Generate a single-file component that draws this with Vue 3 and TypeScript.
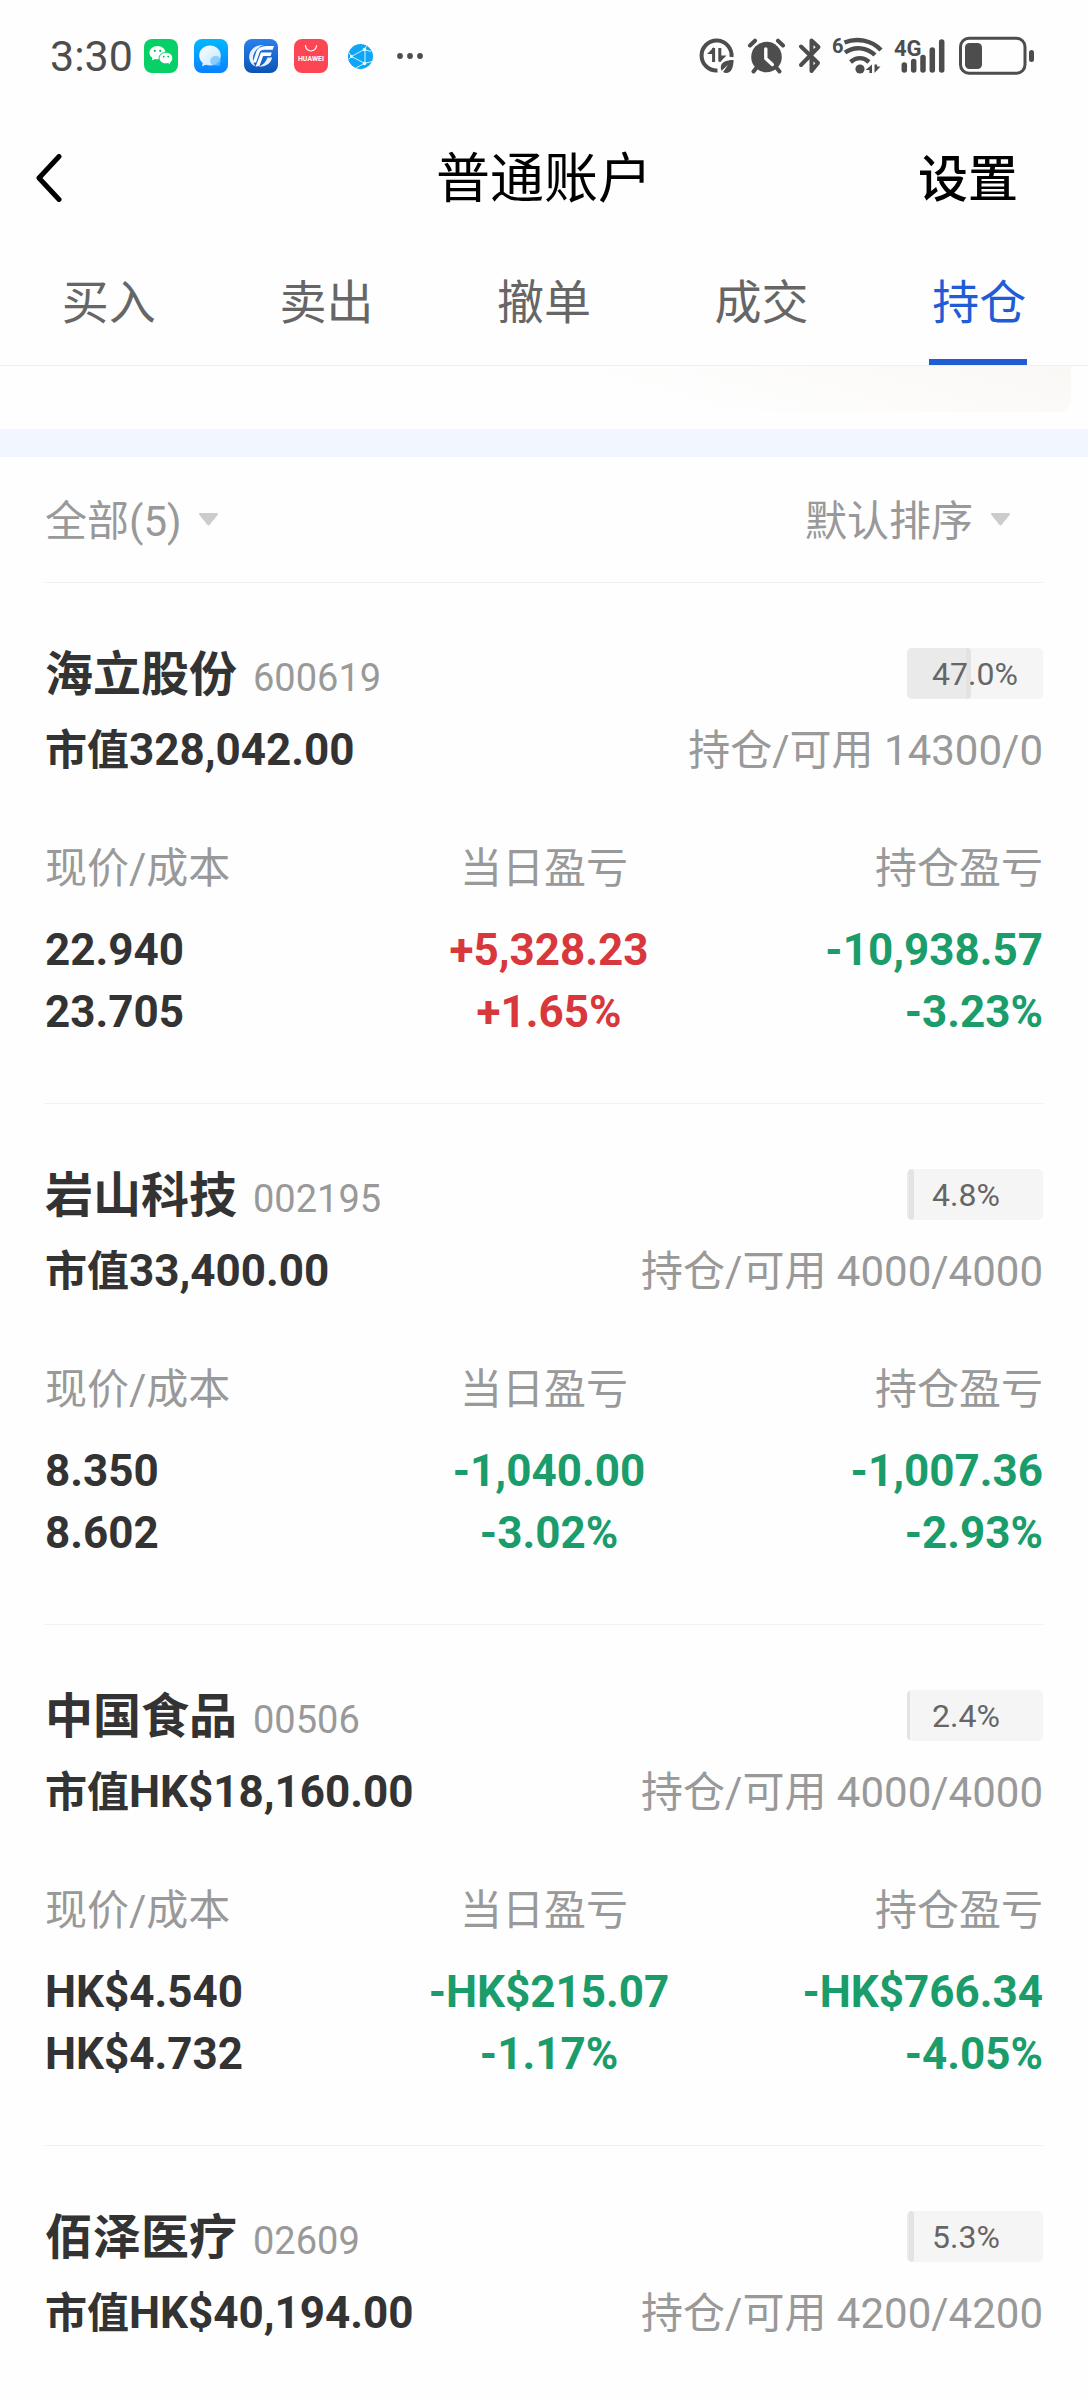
<script setup lang="ts">
import { ref } from 'vue'

type Tone = 'up' | 'down'

interface Profit {
  amount: string
  rate: string
  tone: Tone
}

interface Holding {
  name: string
  code: string
  share: number
  marketValue: string
  quantity: string
  price?: string
  cost?: string
  today?: Profit
  total?: Profit
}

const tabs = ['买入', '卖出', '撤单', '成交', '持仓']
const activeTab = ref('持仓')
const scope = ref('all')
const order = ref('default')

const holdings: Holding[] = [
  {
    name: '海立股份',
    code: '600619',
    share: 47.0,
    marketValue: '328,042.00',
    quantity: '14300/0',
    price: '22.940',
    cost: '23.705',
    today: { amount: '+5,328.23', rate: '+1.65%', tone: 'up' },
    total: { amount: '-10,938.57', rate: '-3.23%', tone: 'down' },
  },
  {
    name: '岩山科技',
    code: '002195',
    share: 4.8,
    marketValue: '33,400.00',
    quantity: '4000/4000',
    price: '8.350',
    cost: '8.602',
    today: { amount: '-1,040.00', rate: '-3.02%', tone: 'down' },
    total: { amount: '-1,007.36', rate: '-2.93%', tone: 'down' },
  },
  {
    name: '中国食品',
    code: '00506',
    share: 2.4,
    marketValue: 'HK$18,160.00',
    quantity: '4000/4000',
    price: 'HK$4.540',
    cost: 'HK$4.732',
    today: { amount: '-HK$215.07', rate: '-1.17%', tone: 'down' },
    total: { amount: '-HK$766.34', rate: '-4.05%', tone: 'down' },
  },
  {
    name: '佰泽医疗',
    code: '02609',
    share: 5.3,
    marketValue: 'HK$40,194.00',
    quantity: '4200/4200',
  },
]
</script>

<template>
  <div class="page">
    <div class="status">
      <div class="status-left">
        <span class="clock">3:30</span>
        <svg width="34" height="34" viewBox="0 0 34 34" aria-hidden="true">
          <rect width="34" height="34" rx="8" fill="#07d067" />
          <path d="M13.500 7C9 7 5.500 10 5.500 13.700c0 2.100 1.100 3.900 2.900 5.100l-.6 2.800 3.100-1.700c.9.200 1.700.3 2.600.3 4.500 0 8-2.900 8-6.500S18 7 13.500 7z" fill="#fff" />
          <path d="M22 13.300c-3.900 0-6.900 2.600-6.900 5.800s3 5.800 6.900 5.800c.8 0 1.500-.1 2.200-.3l2.700 1.400-.6-2.300c1.600-1.100 2.500-2.700 2.500-4.600 0-3.200-3-5.800-6.800-5.800z" fill="#fff" stroke="#07d067" stroke-width="1" />
          <g fill="#07b45c">
            <circle cx="10.800" cy="11.800" r="1.100" /><circle cx="16.200" cy="11.800" r="1.100" />
            <circle cx="19.700" cy="17.600" r=".9" /><circle cx="24.200" cy="17.600" r=".9" />
          </g>
        </svg>
        <svg width="34" height="34" viewBox="0 0 34 34" aria-hidden="true">
          <defs>
            <linearGradient id="msg-bg" x1="0" y1="0" x2="0" y2="1"><stop offset="0" stop-color="#00b8ff" /><stop offset="1" stop-color="#0a80ff" /></linearGradient>
            <linearGradient id="msg-fg" x1="0" y1="0" x2="1" y2="1"><stop offset="0" stop-color="#fff" /><stop offset="1" stop-color="#bfe4ff" /></linearGradient>
          </defs>
          <rect width="34" height="34" rx="8" fill="url(#msg-bg)" />
          <path d="M16 6.500c-6.200 0-10.800 4.500-10.800 10 0 3 1.300 5.700 3.500 7.500l-.6 3.200 3.900-1.500c1.300.5 2.600.7 4 .7 6.200 0 10.800-4.400 10.800-9.900s-4.600-10-10.800-10z" fill="url(#msg-fg)" />
          <path d="M21.500 17c-3 0-5.200 2.200-5.200 4.900s2.200 4.700 5.200 4.700c.8 0 1.500-.1 2.200-.4l2.600.8-.8-2.200c.9-.8 1.300-1.800 1.300-3 0-2.700-2.200-4.800-5.300-4.800z" fill="#6cc4ff" opacity=".75" />
        </svg>
        <svg width="34" height="34" viewBox="0 0 34 34" aria-hidden="true">
          <defs>
            <linearGradient id="gf-bg" x1="0" y1="0" x2="0" y2="1"><stop offset="0" stop-color="#2a80ec" /><stop offset="1" stop-color="#0d54b4" /></linearGradient>
          </defs>
          <rect width="34" height="34" rx="8" fill="url(#gf-bg)" />
          <path d="M20 6C11.500 5.500 5.500 11 5.200 17.500c-.2 4.500 2.300 8.300 6.500 9.900C8.500 23.500 8 18 10.800 13c2-3.500 5-5.800 9.200-7z" fill="#e6f1ff" />
          <path d="M14.500 9.500c3-2.300 7-2.700 15.500-2.500l-1.300 3.700h-8.500c-2.600 0-4 .8-4.700 2.900L12 23.500H8.700l3.300-9.700c.6-1.800 1.300-3.300 2.500-4.300z" fill="#fff" />
          <path d="M17 13.500h10.800l-1.200 3.400h-7.500l-3.500 9.800c-1.300.5-2.500.8-4 .7z" fill="#fff" />
          <path d="M23.500 18.500h4.600c-.8 4.800-5.200 9.500-13.600 9.300 4.500-1.500 7.300-4.600 9-9.300z" fill="#e6f1ff" />
        </svg>
        <svg width="34" height="34" viewBox="0 0 34 34" aria-hidden="true">
          <rect width="34" height="34" rx="8" fill="#fd4654" />
          <path d="M11.500 6.500a5.500 5.500 0 0 0 11 0" fill="none" stroke="#fff" stroke-width="1.200" stroke-linecap="round" />
          <text x="17" y="22" text-anchor="middle" class="store-text">HUAWEI</text>
        </svg>
        <svg class="globe" width="25" height="25" viewBox="0 0 25 25" aria-hidden="true">
          <circle cx="12.500" cy="12.500" r="12.500" fill="#10a5f5" />
          <g fill="none" stroke="#c9f3ff" stroke-width="1">
            <path d="M1 8.500 3.500 12.500 16 5.500 19 1.500M17 5.500v14l-13.500-7L1 15M16 19.500 8 24M16 19.500l8-2M16 5.500l7 2" />
          </g>
          <g fill="#e8fbff"><circle cx="16.500" cy="5.500" r="1.700" /><circle cx="3.500" cy="12.500" r="1.400" /><circle cx="16.500" cy="19.500" r="1.700" /></g>
        </svg>
        <svg width="26" height="8" viewBox="0 0 26 8" aria-hidden="true" fill="#4d4d4d">
          <circle cx="3" cy="4" r="2.900" /><circle cx="13" cy="4" r="2.900" /><circle cx="23" cy="4" r="2.900" />
        </svg>
      </div>
      <div class="status-right">
        <svg width="36" height="40" viewBox="699 36 36 40" aria-hidden="true">
          <path d="M717.500 70.500A15 15 0 1 1 731.500 57" fill="none" stroke="#4d4d4d" stroke-width="4" />
          <path d="M713.600 48v14M719.800 48v13.500" stroke="#4d4d4d" stroke-width="3" fill="none" />
          <path d="M714 47v7h-7zM719.500 62.500v-7h7z" fill="#4d4d4d" />
          <path d="M733.600 60c-7.500 0-12.800 2-12.800 7.500 0 1.300.3 2.300.8 3.200l6.500-6-5 7.400c1 .6 2 .8 3.100.8 5 0 7.200-5 7.400-12.900z" fill="#4d4d4d" />
        </svg>
        <svg width="38" height="40" viewBox="747 36 38 40" aria-hidden="true">
          <circle cx="766.500" cy="57" r="15.300" fill="#4d4d4d" />
          <path d="M750 45.500l5-4.800M783 45.500l-5-4.800M753.500 71.500l4-5M779.500 71.500l-4-5" stroke="#4d4d4d" stroke-width="4" stroke-linecap="round" />
          <path d="M765.800 49v9.500l6.500 6" fill="none" stroke="#fefefe" stroke-width="3.400" stroke-linecap="round" stroke-linejoin="round" />
        </svg>
        <svg width="24" height="40" viewBox="797 36 24 40" aria-hidden="true">
          <path d="M801 46.500 818 63 811.500 71V40.500L818.500 47 801 65" fill="none" stroke="#4d4d4d" stroke-width="4" stroke-linecap="round" stroke-linejoin="round" />
        </svg>
        <svg width="48" height="40" viewBox="833 36 48 40" aria-hidden="true">
          <text x="832" y="53" class="tiny-text">6</text>
          <g fill="none" stroke="#4d4d4d" stroke-width="4.400">
            <path d="M844.500 42.500c12-5 27-2.500 36.500 7.500" />
            <path d="M845 52.500c10-7 22-5 30 2.500" />
            <path d="M850.500 62c6-5 13-5 18.500 0" />
          </g>
          <circle cx="860" cy="69" r="4.600" fill="#4d4d4d" />
          <path d="M872 64.500V73h-2.600v-3H865.500zM874.500 73v-8.500h2.600v2H880.500z" fill="#4d4d4d" />
        </svg>
        <svg width="52" height="40" viewBox="893 36 52 40" aria-hidden="true">
          <text x="894" y="56" class="net-text">4G</text>
          <path d="M904.300 65v5M913.700 61.500V70M923 57.500V70M932.300 50V70M941.700 42V70" stroke="#4d4d4d" stroke-width="5.500" stroke-linecap="round" />
        </svg>
        <svg width="77" height="40" viewBox="957 36 77 40" aria-hidden="true">
          <rect x="960.500" y="38.300" width="64.500" height="35" rx="8.500" fill="none" stroke="#4d4d4d" stroke-width="3" />
          <rect x="965" y="43" width="17" height="26" rx="4.500" fill="#4d4d4d" />
          <rect x="1029" y="50" width="5" height="12" rx="2.500" fill="#4d4d4d" />
        </svg>
      </div>
    </div>

    <header class="header">
      <button class="back" type="button" aria-label="返回">
        <svg width="28" height="48" viewBox="0 0 28 48" aria-hidden="true">
          <path d="M23 2.500 3 24l20 21.500" fill="none" stroke="#000" stroke-width="5" stroke-linecap="round" stroke-linejoin="round" />
        </svg>
      </button>
      <h1 class="title">普通账户</h1>
      <button class="settings" type="button">设置</button>
    </header>

    <nav class="tabs">
      <button
        v-for="tab in tabs"
        :key="tab"
        type="button"
        class="tab"
        :class="{ active: tab === activeTab }"
        @click="activeTab = tab"
      >
        {{ tab }}
      </button>
    </nav>

    <div class="summary"><div class="summary-card"></div></div>

    <main class="content">
      <div class="filters">
        <label class="filter">
          <select v-model="scope" aria-label="持仓范围">
            <option value="all">全部(5)</option>
          </select>
          <svg width="21" height="13" viewBox="0 0 21 13" aria-hidden="true">
            <path d="M2 1h17L10.500 11.500z" fill="#ccc" stroke="#ccc" stroke-width="2" stroke-linejoin="round" />
          </svg>
        </label>
        <label class="filter sort">
          <select v-model="order" aria-label="排序方式">
            <option value="default">默认排序</option>
          </select>
          <svg width="21" height="13" viewBox="0 0 21 13" aria-hidden="true">
            <path d="M2 1h17L10.500 11.500z" fill="#ccc" stroke="#ccc" stroke-width="2" stroke-linejoin="round" />
          </svg>
        </label>
      </div>

      <article v-for="item in holdings" :key="item.code" class="holding">
        <div class="row">
          <div class="stock">
            <h2 class="name">{{ item.name }}</h2>
            <span class="code">{{ item.code }}</span>
          </div>
          <div class="share">
            <div class="share-fill" :style="{ width: item.share + '%' }"></div>
            <span class="share-text">{{ item.share.toFixed(1) }}%</span>
          </div>
        </div>
        <div class="row value-row">
          <strong class="market">市值<span class="amount">{{ item.marketValue }}</span></strong>
          <span class="quantity">持仓/可用 {{ item.quantity }}</span>
        </div>
        <table v-if="item.today && item.total" class="figures">
          <thead>
            <tr>
              <th scope="col">现价/成本</th>
              <th scope="col">当日盈亏</th>
              <th scope="col">持仓盈亏</th>
            </tr>
          </thead>
          <tbody>
            <tr>
              <td>{{ item.price }}</td>
              <td :class="item.today.tone">{{ item.today.amount }}</td>
              <td :class="item.total.tone">{{ item.total.amount }}</td>
            </tr>
            <tr>
              <td>{{ item.cost }}</td>
              <td :class="item.today.tone">{{ item.today.rate }}</td>
              <td :class="item.total.tone">{{ item.total.rate }}</td>
            </tr>
          </tbody>
        </table>
      </article>
    </main>
  </div>
</template>

<style>
body {
  margin: 0;
  background: #fefefe;
}
</style>

<style scoped>
.page {
  min-height: 100vh;
  background: #fefefe;
  color: #333;
  font-family: Roboto, "Noto Sans CJK SC", sans-serif;
  font-size: 42px;
}

button,
select {
  margin: 0;
  padding: 0;
  border: 0;
  background: none;
  color: inherit;
  font: inherit;
}

svg {
  display: block;
  flex: none;
}

.status {
  display: flex;
  align-items: center;
  justify-content: space-between;
  height: 112px;
  padding: 0 54px 0 50px;
}

.status-left {
  display: flex;
  align-items: center;
  gap: 16px;
}

.clock {
  width: 78px;
  color: #4d4d4d;
  font-size: 43px;
  line-height: 56px;
}

.globe {
  margin: 0 8px 0 4px;
}

.status-right {
  display: flex;
  gap: 12px;
}

.status-right svg {
  overflow: visible;
}

.store-text {
  fill: #fff;
  font-size: 7px;
  font-weight: 700;
}

.tiny-text {
  fill: #4d4d4d;
  font-size: 20px;
  font-weight: 700;
}

.net-text {
  fill: #4d4d4d;
  font-size: 22px;
  font-weight: 700;
}

.header {
  display: grid;
  grid-template-columns: 1fr auto 1fr;
  align-items: center;
  height: 132px;
  padding: 0 70px 0 36px;
  color: #000;
}

.back {
  justify-self: start;
}

.title {
  margin: 0 0 0 34px;
  padding-top: 4px;
  font-size: 54px;
  font-weight: 400;
  line-height: 80px;
}

.settings {
  justify-self: end;
  padding-top: 4px;
  font-size: 50px;
  font-weight: 500;
  line-height: 80px;
}

.tabs {
  display: flex;
  height: 121px;
  border-bottom: 1px solid #f0f0f0;
}

.tab {
  position: relative;
  flex: 1;
  padding-bottom: 12px;
  color: #666;
  font-size: 47px;
}

.tab.active {
  color: #1f5cd6;
}

.tab.active::after {
  position: absolute;
  bottom: 0;
  left: 50%;
  width: 98px;
  height: 6px;
  margin-left: -50px;
  background: #1f5cd6;
  content: "";
}

.summary {
  padding: 0 17px 17px;
  border-bottom: 28px solid #f2f6fe;
}

.summary-card {
  height: 46px;
  border-radius: 0 0 12px 12px;
  background: linear-gradient(17deg, #fefefe 56%, #faf8f5 100%);
}

.content {
  padding: 0 45px;
}

.filters {
  display: flex;
  align-items: center;
  justify-content: space-between;
  height: 125px;
  border-bottom: 1px solid #f1f1f1;
  color: #999;
}

.filter {
  display: flex;
  align-items: center;
  gap: 16px;
}

.filter select {
  padding-top: 4px;
  appearance: none;
  line-height: 64px;
}

.sort {
  margin-right: 32px;
}

.holding {
  padding: 52px 0 60px;
  border-bottom: 1px solid #f1f1f1;
}

.holding:last-child {
  padding-bottom: 0;
  border-bottom: 0;
}

.row {
  display: flex;
  align-items: center;
  justify-content: space-between;
  height: 76px;
}

.value-row {
  height: 70px;
}

.stock {
  display: flex;
  align-items: baseline;
  gap: 16px;
  padding-top: 4px;
}

.name {
  margin: 0;
  font-size: 48px;
  font-weight: 700;
  line-height: 76px;
}

.code {
  color: #999;
  font-size: 38px;
}

.share {
  position: relative;
  width: 136px;
  height: 51px;
  overflow: hidden;
  border-radius: 5px;
  background: #f5f5f5;
}

.share-fill {
  height: 100%;
  border-radius: 4px;
  background: linear-gradient(to left, #e3e3e3 5px, #eaeaea 5px);
}

.share-text {
  position: absolute;
  inset: 0 0 0 25px;
  color: #666;
  font-size: 32px;
  line-height: 53px;
}

.market {
  font-weight: 700;
}

.amount {
  font-size: 44px;
}

.quantity {
  color: #999;
}

.figures {
  width: 100%;
  margin-top: 48px;
  border-collapse: collapse;
  table-layout: fixed;
}

.figures th,
.figures td {
  padding: 0;
  text-align: left;
}

.figures th {
  box-sizing: border-box;
  height: 90px;
  padding-bottom: 10px;
  color: #999;
  font-weight: 400;
  line-height: 80px;
}

.figures td {
  height: 62px;
  font-size: 44px;
  font-weight: 700;
  line-height: 62px;
}

.figures th:nth-child(2) {
  text-align: center;
}

.figures td:nth-child(2) {
  padding-left: 10px;
  text-align: center;
}

.figures th:nth-child(3),
.figures td:nth-child(3) {
  text-align: right;
}

.figures .up {
  color: #d8373c;
}

.figures .down {
  color: #1a9c6b;
}
</style>
